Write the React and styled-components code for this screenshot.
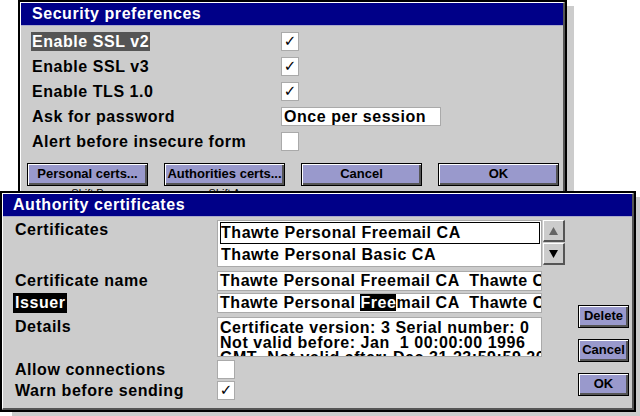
import styled, { createGlobalStyle } from 'styled-components'

const GlobalStyle = createGlobalStyle`
  html, body {
    margin: 0;
    padding: 0;
    background: #ffffff;
  }
  body {
    font-family: "Liberation Sans", Arial, sans-serif;
    font-weight: bold;
    font-size: 16px;
    letter-spacing: 0.55px;
    color: #000;
  }
`

const Desktop = styled.div`
  position: relative;
  width: 640px;
  height: 416px;
  overflow: hidden;
  background: #ffffff;
`

// windows sit on a free desktop, so they are placed by coordinates
const Window = styled.div`
  position: absolute;
  left: ${(p) => p.$x}px;
  top: ${(p) => p.$y}px;
  width: ${(p) => p.$w}px;
  height: ${(p) => p.$h}px;
  box-sizing: border-box;
  border: 2px solid #000;
  background: #cccccc;
  box-shadow: ${(p) => p.$shadow};
  display: flex;
`

const Frame = styled.div`
  flex: 1;
  display: flex;
  flex-direction: column;
  border-top: 1px solid #fff;
  border-left: 1px solid #fff;
  border-right: 2px solid #555;
  border-bottom: 2px solid #555;
  min-width: 0;
`

const TitleBar = styled.div`
  height: 22px;
  flex: none;
  background: #000088;
  color: #fff;
  line-height: 22px;
  padding-left: ${(p) => p.$pad}px;
  border-bottom: 1px solid #aaaacc;
  white-space: nowrap;
`

/* ---------- security preferences ---------- */

const PrefBody = styled.div`
  padding: 6px 4px 0 6px;
`

const PrefGrid = styled.div`
  display: grid;
  grid-template-columns: 249px auto;
  grid-auto-rows: 19px;
  row-gap: 6px;
  padding-left: 5px;
  align-items: start;
`

const Label = styled.span`
  display: inline-block;
  justify-self: start;
  line-height: 19px;
  height: 19px;
  padding: 0 ${(p) => (p.$pad ? p.$pad : 0)}px;
  margin-left: ${(p) => (p.$pad ? -p.$pad : 0)}px;
  white-space: nowrap;
  background: ${(p) => p.$bg || 'transparent'};
  color: ${(p) => (p.$bg ? '#fff' : '#000')};
`

const Check = styled.div`
  grid-column: 2;
  width: 18px;
  height: 19px;
  box-sizing: border-box;
  border: 1px solid #aaaaaa;
  background: #fff;
  display: flex;
  align-items: center;
  justify-content: center;
  font-family: "DejaVu Sans", sans-serif;
  font-weight: normal;
  font-size: 15px;
  line-height: 17px;
  letter-spacing: 0;
`

const Field = styled.div`
  grid-column: 2;
  width: ${(p) => p.$w}px;
  height: ${(p) => p.$h || 19}px;
  box-sizing: border-box;
  border: 1px solid #aaaaaa;
  background: #fff;
  padding-left: 2px;
  line-height: ${(p) => (p.$h || 19) - 2}px;
  white-space: pre;
  overflow: hidden;
`

const ButtonRow = styled.div`
  display: flex;
  gap: 16px;
  margin-top: 12px;
`

const ButtonCol = styled.div`
  display: flex;
  flex-direction: column;
  align-items: center;
`

const Button = styled.div`
  width: ${(p) => p.$w}px;
  height: 23px;
  box-sizing: border-box;
  border: 1px solid #000;
  background: #9999cc;
  box-shadow: inset 1px 1px 0 #fff, inset -2px -2px 0 #555;
  font-size: 13px;
  letter-spacing: 0;
  line-height: 20px;
  text-align: center;
  white-space: nowrap;
`

const Hint = styled.div`
  font-size: 11px;
  font-weight: normal;
  letter-spacing: 0;
  line-height: 12px;
  margin-top: 1px;
`

/* ---------- authority certificates ---------- */

const CertBody = styled.div`
  display: grid;
  grid-template-columns: 204px 325px 1px 22px 1fr;
  grid-template-rows: 51px 22px 24px 43px 21px 20px;
  padding: 3px 3px 0 10px;
  align-items: start;
`

const CertLabel = styled(Label)`
  grid-column: 1;
  padding: 0 2px;
  line-height: ${(p) => p.$lh || 19}px;
  height: ${(p) => p.$lh || 19}px;
`

const List = styled.div`
  grid-column: 2;
  height: 47px;
  box-sizing: border-box;
  border: 1px solid #aaaaaa;
  background: #fff;
  padding: 1px 1px 0 2px;
`

const ListItem = styled.div`
  height: 22px;
  box-sizing: border-box;
  border: 1px solid ${(p) => (p.$selected ? '#000' : 'transparent')};
  line-height: 20px;
  white-space: pre;
  overflow: hidden;
`

const Scroller = styled.div`
  grid-column: 4;
  display: flex;
  flex-direction: column;
  gap: 1px;
`

const ScrollBtn = styled.div`
  width: 22px;
  height: 22px;
  box-sizing: border-box;
  background: #cccccc;
  border-top: 1px solid #fff;
  border-left: 1px solid #fff;
  border-right: 2px solid #555;
  border-bottom: 2px solid #555;
  display: flex;
  align-items: center;
  justify-content: center;
`

const Details = styled.div`
  grid-column: 2;
  height: 40px;
  box-sizing: border-box;
  border: 1px solid #aaaaaa;
  background: #fff;
  padding: 2px 0 0 2px;
  line-height: 15px;
  white-space: pre;
  overflow: hidden;
`

const Sel = styled.span`
  background: #000;
  color: #fff;
`

const SideButtons = styled.div`
  grid-column: 5;
  grid-row: 1 / -1;
  display: flex;
  flex-direction: column;
  gap: 11px;
  padding: 85px 0 0 13px;
`

const Arrow = ({ up, color }) => (
  <svg width="11" height="10" viewBox="0 0 11 10">
    <polygon points={up ? '5.5,1 10,9 1,9' : '1,1 10,1 5.5,9'} fill={color} />
  </svg>
)

const prefs = [
  { label: 'Enable SSL v2', checked: true, focus: true },
  { label: 'Enable SSL v3', checked: true },
  { label: 'Enable TLS 1.0', checked: true },
  { label: 'Ask for password', value: 'Once per session' },
  { label: 'Alert before insecure form', checked: false },
]

export default function App() {
  return (
    <Desktop>
      <GlobalStyle />

      <Window $x={18} $y={0} $w={549} $h={214} $shadow="7px 6px 0 #cccccc">
        <Frame>
          <TitleBar $pad={11}>Security preferences</TitleBar>
          <PrefBody>
            <PrefGrid>
              {prefs.flatMap((p) => [
                <Label key={p.label} $bg={p.focus ? '#555555' : null} $pad={p.focus ? 1 : 0}>
                  {p.label}
                </Label>,
                p.value ? (
                  <Field key={p.label + '-v'} $w={160}>{p.value}</Field>
                ) : (
                  <Check key={p.label + '-v'}>{p.checked ? '✓' : ''}</Check>
                ),
              ])}
            </PrefGrid>
            <ButtonRow>
              <ButtonCol>
                <Button $w={121}>Personal certs...</Button>
                <Hint>Shift P</Hint>
              </ButtonCol>
              <ButtonCol>
                <Button $w={121}>Authorities certs...</Button>
                <Hint>Shift A</Hint>
              </ButtonCol>
              <ButtonCol>
                <Button $w={121}>Cancel</Button>
              </ButtonCol>
              <ButtonCol>
                <Button $w={121}>OK</Button>
              </ButtonCol>
            </ButtonRow>
          </PrefBody>
        </Frame>
      </Window>

      <Window $x={0} $y={191} $w={636} $h={221} $shadow="12px 6px 0 #cccccc">
        <Frame>
          <TitleBar $pad={10}>Authority certificates</TitleBar>
          <CertBody>
            <CertLabel>Certificates</CertLabel>
            <List>
              <ListItem $selected>Thawte Personal Freemail CA</ListItem>
              <ListItem>Thawte Personal Basic CA</ListItem>
            </List>
            <Scroller>
              <ScrollBtn>
                <Arrow up color="#666666" />
              </ScrollBtn>
              <ScrollBtn>
                <Arrow color="#000" />
              </ScrollBtn>
            </Scroller>
            <SideButtons>
              <Button $w={51}>Delete</Button>
              <Button $w={51}>Cancel</Button>
              <Button $w={51}>OK</Button>
            </SideButtons>

            <CertLabel $lh={20}>Certificate name</CertLabel>
            <Field $w={325} $h={20}>Thawte Personal Freemail CA  Thawte Consulting</Field>

            <CertLabel $bg="#000" $lh={20}>Issuer</CertLabel>
            <Field $w={325} $h={20}>
              Thawte Personal <Sel>Free</Sel>mail CA  Thawte Consulting
            </Field>

            <CertLabel>Details</CertLabel>
            <Details>
              {'Certificate version: 3 Serial number: 0\nNot valid before: Jan  1 00:00:00 1996\nGMT  Not valid after: Dec 31 23:59:59 2020'}
            </Details>

            <CertLabel>Allow connections</CertLabel>
            <Check />

            <CertLabel>Warn before sending</CertLabel>
            <Check>✓</Check>
          </CertBody>
        </Frame>
      </Window>
    </Desktop>
  )
}
